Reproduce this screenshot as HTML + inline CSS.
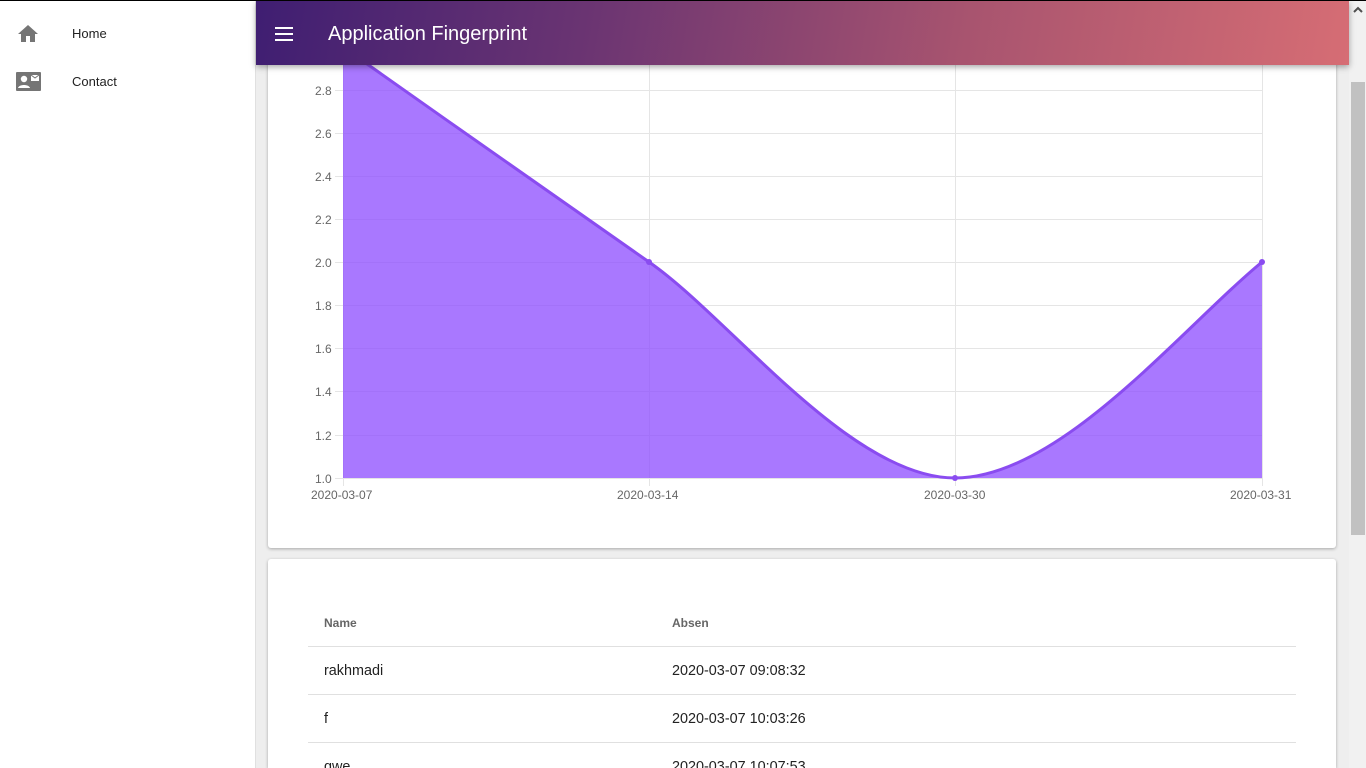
<!DOCTYPE html>
<html style="overflow:hidden;height:768px"><head><meta charset="utf-8"><style>
*{margin:0;padding:0;box-sizing:border-box}
html,body{overflow:hidden}
body{width:1366px;height:768px;overflow:hidden;background:#eeeeee;font-family:"Liberation Sans",Arial,sans-serif;position:relative}
.topline{position:absolute;left:0;top:0;width:1366px;height:1px;background:#000;z-index:10}
.side{position:absolute;left:0;top:1px;width:256px;height:767px;background:#fff;border-right:1px solid #e0e0e0}
.side .it{position:absolute;left:72px;font-size:13px;color:#222}
.hdr{position:absolute;left:256px;top:1px;width:1093px;height:64px;background:linear-gradient(100deg,#3f1e72 0%,#6a3472 30%,#a8546f 65%,#d66d74 100%);box-shadow:0 2px 6px rgba(0,0,0,.35);z-index:5}
.hdr .t{position:absolute;left:72px;top:22px;color:#fff;font-size:20px}
.card{position:absolute;background:#fff;border-radius:3px;box-shadow:0 1px 3px rgba(0,0,0,.3)}
.sb{position:absolute;left:1349px;top:1px;width:17px;height:767px;background:#f1f1f1}
.thumb{position:absolute;left:1351px;top:82px;width:14px;height:453px;background:#c1c1c1}
.ax{position:absolute;font-size:12px;color:#666}
.row{position:absolute;left:308px;width:988px;border-top:1px solid #e0e0e0}
.cell{position:absolute;font-size:14.4px;color:#222}
.th{position:absolute;font-size:12px;color:#666;font-weight:bold}
</style></head><body>
<div class="topline"></div>
<div class="side">
<svg style="position:absolute;left:17px;top:23px" width="22" height="20" viewBox="0 0 22 20"><path d="M11 1L1 10h3v8h5v-6h4v6h5v-8h3z" fill="#757575"/></svg>
<div class="it" style="top:25px">Home</div>
<svg style="position:absolute;left:16px;top:71px" width="25" height="20" viewBox="0 0 25 20"><rect x="0" y="0" width="25" height="19" rx="1" fill="#757575"/><circle cx="8" cy="7" r="3.2" fill="#fff"/><path d="M2 16c1-4 11-4 12 0z" fill="#fff"/><rect x="15" y="3" width="8" height="6" fill="#fff"/><path d="M15 3l4 3 4-3" stroke="#757575" fill="none" stroke-width="1"/></svg>
<div class="it" style="top:73px">Contact</div>
</div>
<div class="card" style="left:268px;top:20px;width:1068px;height:528px"></div>
<div class="card" style="left:268px;top:559px;width:1068px;height:209px;border-radius:3px 3px 0 0"></div>
<svg style="position:absolute;left:0;top:0" width="1349" height="768">
<g stroke="#e5e5e5" stroke-width="1">
<line x1="335" y1="90.5" x2="1262" y2="90.5"/><line x1="335" y1="133.5" x2="1262" y2="133.5"/><line x1="335" y1="176.5" x2="1262" y2="176.5"/><line x1="335" y1="219.5" x2="1262" y2="219.5"/><line x1="335" y1="262.5" x2="1262" y2="262.5"/><line x1="335" y1="305.5" x2="1262" y2="305.5"/><line x1="335" y1="348.5" x2="1262" y2="348.5"/><line x1="335" y1="391.5" x2="1262" y2="391.5"/><line x1="335" y1="435.5" x2="1262" y2="435.5"/><line x1="335" y1="478.5" x2="1262" y2="478.5"/>
<line x1="343.5" y1="40" x2="343.5" y2="486"/><line x1="649.5" y1="40" x2="649.5" y2="486"/><line x1="955.5" y1="40" x2="955.5" y2="486"/><line x1="1262.5" y1="40" x2="1262.5" y2="486"/>
</g>
<path d="M343,47 C445,119 560,200 649,262 C730,318 850,478 955,478 C1060,478 1180,330 1262,262 L1262,478 L343,478Z" fill="rgba(145,82,255,0.78)"/>
<path d="M343,47 C445,119 560,200 649,262 C730,318 850,478 955,478 C1060,478 1180,330 1262,262" fill="none" stroke="#8a4cf0" stroke-width="3"/>
<g fill="#8a4cf0"><circle cx="649" cy="262" r="3"/><circle cx="955" cy="478" r="3"/><circle cx="1262" cy="262" r="3"/></g>
</svg>
<div class="ax" style="left:315px;top:84px">2.8</div>
<div class="ax" style="left:315px;top:127px">2.6</div>
<div class="ax" style="left:315px;top:170px">2.4</div>
<div class="ax" style="left:315px;top:213px">2.2</div>
<div class="ax" style="left:315px;top:256px">2.0</div>
<div class="ax" style="left:315px;top:299px">1.8</div>
<div class="ax" style="left:315px;top:342px">1.6</div>
<div class="ax" style="left:315px;top:385px">1.4</div>
<div class="ax" style="left:315px;top:429px">1.2</div>
<div class="ax" style="left:315px;top:472px">1.0</div>
<div class="ax" style="left:311px;top:488px">2020-03-07</div>
<div class="ax" style="left:617px;top:488px">2020-03-14</div>
<div class="ax" style="left:924px;top:488px">2020-03-30</div>
<div class="ax" style="left:1230px;top:488px">2020-03-31</div>
<div class="th" style="left:324px;top:616px">Name</div>
<div class="th" style="left:672px;top:616px">Absen</div>
<div class="row" style="top:646px"></div>
<div class="cell" style="left:324px;top:663px">rakhmadi</div>
<div class="cell" style="left:672px;top:663px">2020-03-07 09:08:32</div>
<div class="row" style="top:694px"></div>
<div class="cell" style="left:324px;top:711px">f</div>
<div class="cell" style="left:672px;top:711px">2020-03-07 10:03:26</div>
<div class="row" style="top:742px"></div>
<div class="cell" style="left:324px;top:759px">qwe</div>
<div class="cell" style="left:672px;top:759px">2020-03-07 10:07:53</div>
<div class="hdr">
<svg style="position:absolute;left:19px;top:26px" width="18" height="14" viewBox="0 0 18 14"><rect y="0" width="18" height="2" fill="#fff"/><rect y="6" width="18" height="2" fill="#fff"/><rect y="12" width="18" height="2" fill="#fff"/></svg>
<div class="t">Application Fingerprint</div>
</div>
<div class="sb"></div>
<svg style="position:absolute;left:1353px;top:6px" width="10" height="7" viewBox="0 0 10 7"><path d="M1 6l4-4 4 4" stroke="#505050" stroke-width="2" fill="none"/></svg>
<div class="thumb"></div>
</body></html>
